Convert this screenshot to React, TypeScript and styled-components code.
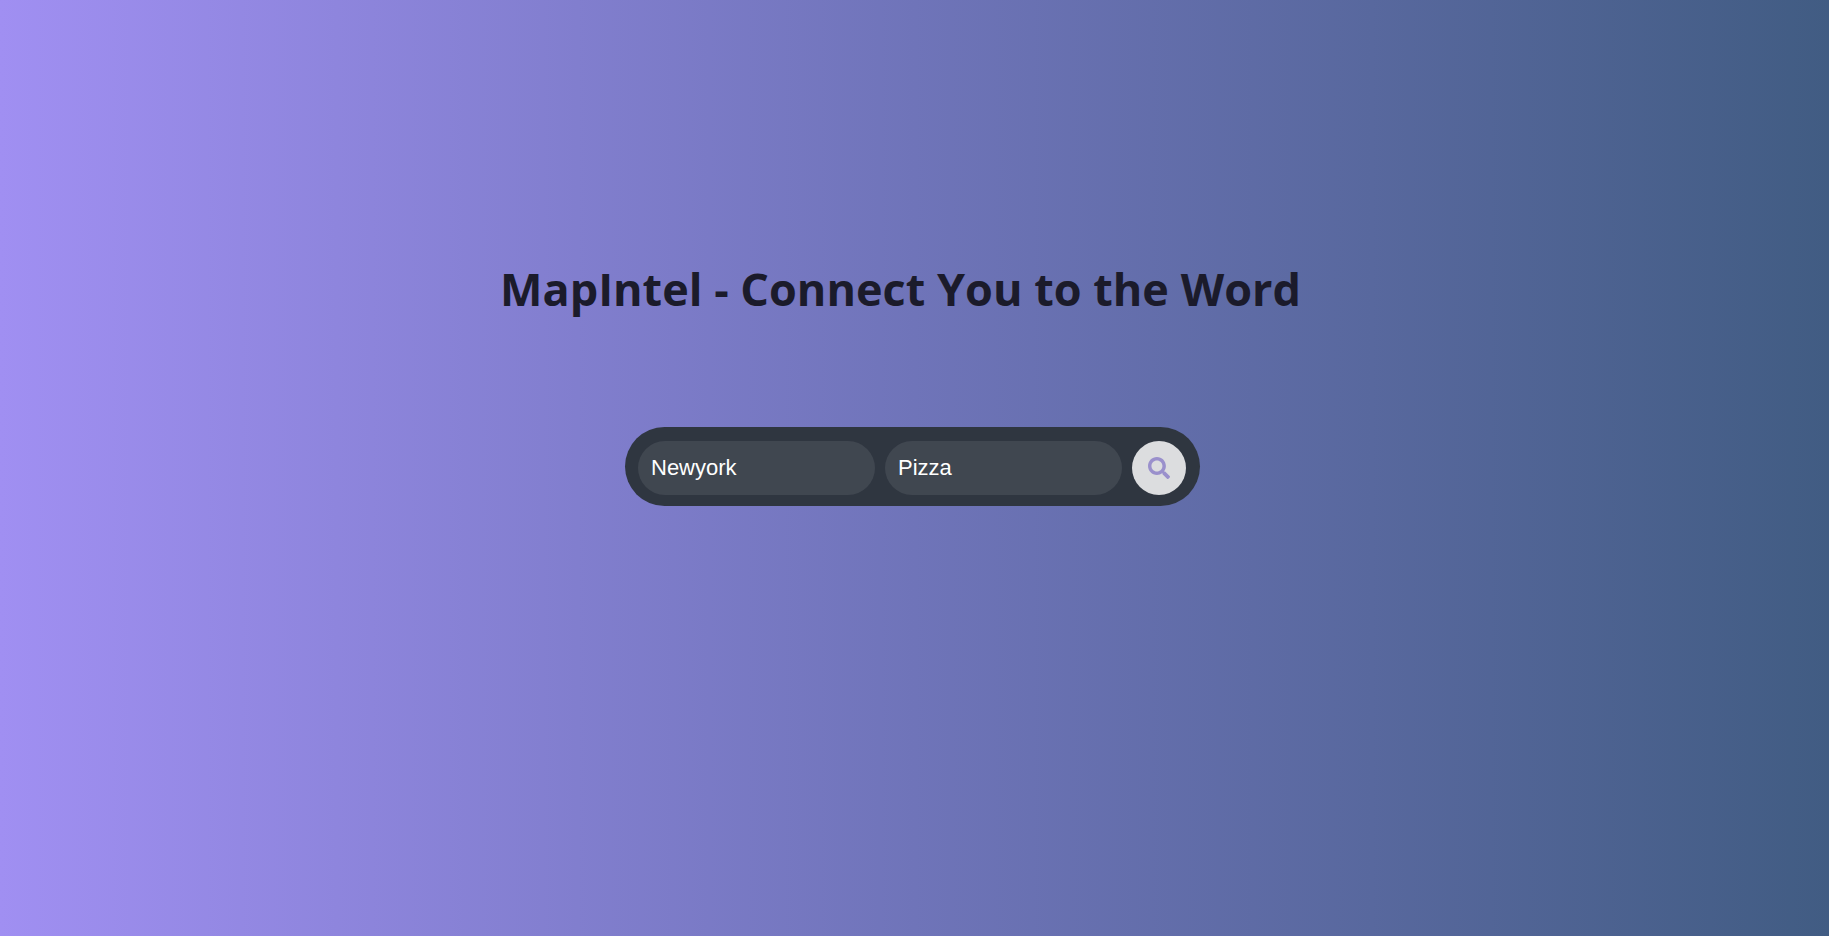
import React from "react";
import styled, { createGlobalStyle } from "styled-components";
import { FaSearch } from "react-icons/fa";

const GlobalStyle = createGlobalStyle`
  * { box-sizing: border-box; }
  body { margin: 0; }
`;

const Page = styled.main`
  min-height: 100vh;
  display: flex;
  flex-direction: column;
  align-items: center;
  padding: 255px 28px 48px 24px;
  background: linear-gradient(to right, #a08ff2, #6f74b9 50%, #415c83);
  font-family: "Open Sans", sans-serif;
`;

const Title = styled.h1`
  margin: 0 24px 104px 0;
  color: #1b1b2b;
  font-size: 45px;
  line-height: 68px;
  font-weight: 680;
  text-align: center;
`;

const SearchBar = styled.form`
  display: flex;
  align-items: center;
  gap: 10px;
  padding: 14px 14px 11px 13px;
  border-radius: 40px;
  background: #2f3640;
`;

const SearchField = styled.input`
  width: 237px;
  height: 54px;
  padding: 0 13px;
  border: 0;
  border-radius: 27px;
  outline: none;
  background: #404750;
  color: #fff;
  font: 22px "Liberation Sans", Arial, sans-serif;
`;

const SearchButton = styled.button`
  display: grid;
  place-items: center;
  width: 54px;
  height: 54px;
  padding: 0;
  border: 0;
  border-radius: 50%;
  background: #dcdddf;
  color: #9a90cc;
  font-size: 22px;
  cursor: pointer;
`;

export default function App() {
  return (
    <Page>
      <GlobalStyle />
      <Title>MapIntel - Connect You to the Word</Title>
      <SearchBar onSubmit={(event) => event.preventDefault()}>
        <SearchField aria-label="Location" defaultValue="Newyork" />
        <SearchField aria-label="Search term" defaultValue="Pizza" />
        <SearchButton type="submit" aria-label="Search">
          <FaSearch aria-hidden="true" />
        </SearchButton>
      </SearchBar>
    </Page>
  );
}
